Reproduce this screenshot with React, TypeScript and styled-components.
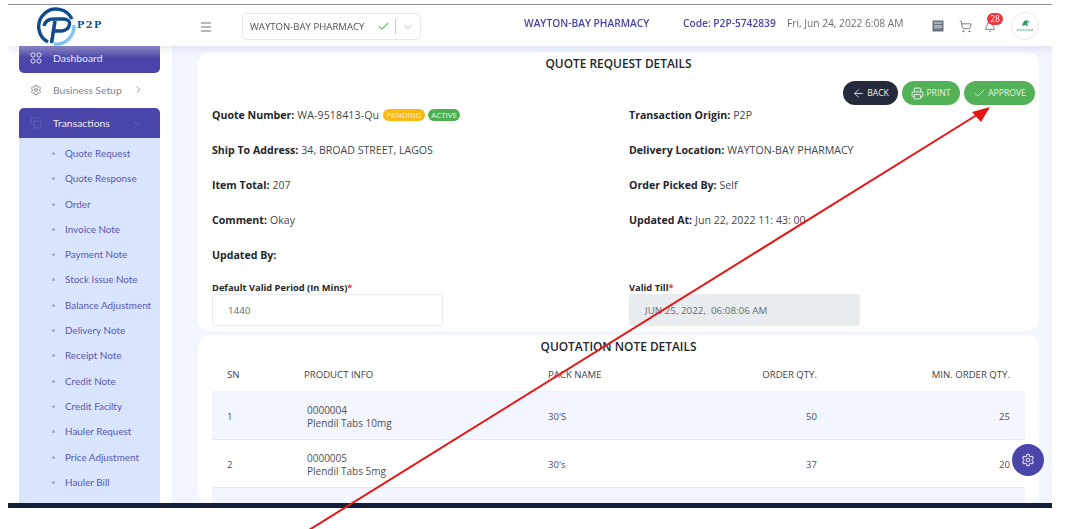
import React, { FunctionComponent } from "react";

// packages
import styled, { createGlobalStyle } from "styled-components";
import {
  ArrowLeft,
  Bell,
  Check,
  ChevronDown,
  ChevronRight,
  Copy,
  Menu,
  Printer,
  Settings,
  ShoppingCart,
} from "lucide-react";

const GlobalStyle = createGlobalStyle`
  html, body {
    margin: 0;
    padding: 0;
    background: #fff;
    overflow: hidden;
  }
  body {
    font-family: "Open Sans", "Noto Sans", sans-serif;
  }
`;

const Page = styled.div`
  position: relative;
  width: 1072px;
  height: 529px;
  padding: 4px 20px 0 8px;
  box-sizing: border-box;
  filter: blur(0.45px);
`;

const Screen = styled.div`
  width: 1044px;
  height: 504px;
  display: flex;
  flex-direction: column;
  border-top: 1px solid #8f9096;
  border-bottom: 5px solid #141f3c;
  box-sizing: border-box;
  overflow: hidden;
`;

/* header */
const Header = styled.header`
  position: relative;
  z-index: 2;
  flex: 0 0 41px;
  display: flex;
  align-items: center;
  background: #fff;
  box-shadow: 0 3px 8px rgba(90, 100, 170, 0.16);
`;

const Brand = styled.div`
  width: 191px;
  display: flex;
  align-items: center;
  padding-left: 28px;
  box-sizing: border-box;
  gap: 1px;
`;

const BrandName = styled.span`
  font-family: "DejaVu Serif", serif;
  font-size: 10px;
  font-weight: 700;
  letter-spacing: 1.2px;
  color: #10508f;
  margin-top: -3px;
`;

const Burger = styled(Menu)`
  color: #6f7278;
  margin-top: 2px;
`;

const StoreSelect = styled.div`
  width: 179px;
  height: 27px;
  margin-left: 29px;
  margin-top: 2px;
  display: flex;
  align-items: center;
  border: 1px solid #e6e8ee;
  border-radius: 4px;
  box-sizing: border-box;
  padding-left: 7px;
  font-size: 9.6px;
  color: #4c4f57;
`;

const SelectText = styled.span`
  width: 127px;
  white-space: nowrap;
`;

const SelectDivider = styled.span`
  width: 1px;
  height: 15px;
  background: #c8cad0;
  margin: 0 6px 0 5px;
`;

const HeaderName = styled.span`
  margin-left: 103px;
  margin-top: -5px;
  width: 159px;
  font-size: 10.2px;
  font-weight: 600;
  color: #4744a6;
  white-space: nowrap;
`;

const HeaderCode = styled(HeaderName)`
  margin-left: 0;
  width: 104px;
`;

const HeaderDate = styled.span`
  margin-top: -5px;
  font-size: 10.2px;
  color: #6a6d75;
  white-space: nowrap;
  width: 145px;
`;

const HeaderIcons = styled.div`
  display: flex;
  align-items: center;
  gap: 15px;
  margin-top: 1px;
  color: #60646c;
`;

const BellWrap = styled.div`
  position: relative;
  display: flex;
  margin-left: -3px;
  margin-top: 2px;
`;

const BellBadge = styled.span`
  position: absolute;
  top: -8px;
  left: 3px;
  width: 16px;
  height: 12px;
  border-radius: 6px;
  background: #ee3440;
  color: #fff;
  font-size: 8.4px;
  line-height: 12px;
  text-align: center;
`;

const Avatar = styled.div`
  width: 28px;
  height: 28px;
  display: flex;
  align-items: center;
  justify-content: center;
  border: 1px solid #dfe8fa;
  border-radius: 50%;
  box-sizing: border-box;
  background: #fff;
`;

/* body */
const Body = styled.div`
  flex: 1;
  min-height: 0;
  display: flex;
`;

const Sidebar = styled.nav`
  flex: 0 0 164px;
  padding: 0 12px 0 11px;
  box-sizing: border-box;
  background: #fff;
  font-family: "Lato", sans-serif;
  overflow: hidden;
`;

const ActiveItem = styled.div<{ $flat?: boolean }>`
  height: ${({ $flat }) => ($flat ? "27px" : "30px")};
  display: flex;
  align-items: center;
  padding-left: 11px;
  padding-bottom: ${({ $flat }) => ($flat ? "4px" : "0")};
  gap: 11px;
  background: ${({ $flat }) =>
    $flat ? "linear-gradient(#8d89c6, #4a45a8 45%)" : "#4a45a8"};
  color: #eceaf8;
  font-size: 10.4px;
  border-radius: ${({ $flat }) => ($flat ? "0 0 5px 5px" : "5px 5px 0 0")};
  box-sizing: border-box;
`;

const PlainItem = styled.div`
  height: 35px;
  display: flex;
  align-items: center;
  padding-left: 11px;
  padding-bottom: 2px;
  gap: 11px;
  font-size: 10.4px;
  color: #80838c;
  box-sizing: border-box;
`;

const ItemLabel = styled.span`
  min-width: 68px;
`;

const SubMenu = styled.ul`
  list-style: none;
  margin: 0;
  padding: 3px 0 0 46px;
  height: 370px;
  background: #d9e5ff;
  box-sizing: border-box;
`;

const SubItem = styled.li`
  position: relative;
  height: 25.3px;
  line-height: 25.3px;
  font-size: 9.9px;
  color: #5a58b0;
  white-space: nowrap;

  &::before {
    content: "";
    position: absolute;
    left: -13px;
    top: 11px;
    width: 3px;
    height: 3px;
    border-radius: 50%;
    background: #a5a8b2;
  }
`;

const Main = styled.main`
  flex: 1;
  min-width: 0;
  padding: 6px 13px 0 26px;
  display: flex;
  flex-direction: column;
  gap: 4px;
  background: #f3f6ff;
  overflow: hidden;
`;

const Card = styled.section`
  background: #fff;
  border-radius: 12px;
  padding: 0 14px;
  box-sizing: border-box;
  position: relative;
`;

const DetailsCard = styled(Card)`
  flex: 0 0 279px;
`;

const QuotationCard = styled(Card)`
  flex: 1;
  overflow: hidden;
`;

const CardTitle = styled.h2`
  margin: 0;
  padding-top: 3px;
  height: 20px;
  font-size: 11.9px;
  line-height: 16px;
  font-weight: 600;
  color: #24262c;
  text-align: center;
`;

const Actions = styled.div`
  display: flex;
  justify-content: flex-end;
  gap: 4px;
  margin: 3px -10px 0 0;
  height: 24px;
  padding-top: 3px;
`;

const ActionButton = styled.button<{ $dark?: boolean; $width: number }>`
  width: ${({ $width }) => $width}px;
  height: 24px;
  display: flex;
  align-items: center;
  justify-content: center;
  gap: 2px;
  padding: 0;
  border: 0;
  border-radius: 12px;
  background: ${({ $dark }) => ($dark ? "#262b3b" : "#53b257")};
  color: #e8f3e8;
  font-family: inherit;
  font-size: 8.6px;
`;

const DetailGrid = styled.div`
  display: grid;
  grid-template-columns: 417px 1fr;
  grid-auto-rows: 35px;
  margin-top: -8px;
  font-size: 10.6px;
  color: #44474e;
`;

const Detail = styled.div`
  display: flex;
  align-items: center;
  gap: 3px;
  white-space: nowrap;
`;

const DetailLabel = styled.b`
  font-weight: 700;
  color: #24262c;
`;

const QuoteValue = styled.span`
  margin-right: 1px;
  letter-spacing: 0.1px;
`;

const Pill = styled.span<{ $color: string }>`
  height: 12px;
  line-height: 12px;
  padding: 0 3.5px;
  border-radius: 6px;
  background: ${({ $color }) => $color};
  color: #f4f4ea;
  font-size: 7.9px;
`;

const FieldGrid = styled.div`
  display: grid;
  grid-template-columns: 417px 1fr;
  margin-top: 7px;
`;

const FieldLabel = styled.label`
  display: block;
  height: 15px;
  font-size: 9.3px;
  line-height: 17px;
  font-weight: 700;
  color: #24262c;
  white-space: nowrap;

  & > i {
    font-style: normal;
    color: #e23b3b;
  }
`;

const FieldBox = styled.div<{ $disabled?: boolean }>`
  width: 231px;
  height: 32px;
  padding-left: 15px;
  display: flex;
  align-items: center;
  box-sizing: border-box;
  border: 1px solid #e8eaef;
  border-radius: 3px;
  background: ${({ $disabled }) => ($disabled ? "#e9ecef" : "#fff")};
  font-size: 9.8px;
  color: #686b72;
  white-space: nowrap;
`;

const Table = styled.div`
  font-size: 9.6px;
  color: #4d5058;
`;

const Row = styled.div<{ $tint?: boolean; $head?: boolean }>`
  display: grid;
  grid-template-columns: 77px 244px 140px 129px 1fr;
  align-items: center;
  height: ${({ $head }) => ($head ? "33px" : "45px")};
  padding: ${({ $head }) => ($head ? "0 15px" : "2px 15px 0")};
  background: ${({ $tint }) => ($tint ? "#f3f6ff" : "#fff")};
  border-bottom: 1px solid ${({ $head }) => ($head ? "#eef1f8" : "#e6e8ee")};
  color: ${({ $head }) => ($head ? "#3f424a" : "#4d5058")};
`;

const RightCell = styled.div`
  text-align: right;
`;

const ProductCell = styled.div`
  padding-left: 3px;
  font-size: 10px;
  line-height: 13px;
`;

const SettingsFab = styled.button`
  position: absolute;
  left: 1012px;
  top: 444px;
  width: 32px;
  height: 32px;
  display: flex;
  align-items: center;
  justify-content: center;
  padding: 0;
  border: 0;
  border-radius: 50%;
  background: #4a45a8;
  color: #d9d8f2;
`;

const ArrowOverlay = styled.svg`
  position: absolute;
  left: 0;
  top: 0;
  pointer-events: none;
`;

const LogoMark: FunctionComponent = () => (
  <svg width="40" height="40" viewBox="0 0 40 40" fill="none">
    <path d="M18 38A18 18 0 0 0 38 19" stroke="#7cc3ee" strokeWidth="3.4" />
    <path d="M12 36A17.5 17.5 0 1 1 36 13" stroke="#0f4c8c" strokeWidth="3.4" />
    <path
      d="M8 20c1-5 5-7 10-7h9c5 0 7 2.500 6.500 5.500-.5 3-3 6-8 6.500h-7"
      stroke="#0f4c8c"
      strokeWidth="3.4"
    />
    <path d="M19 15l-3.500 22" stroke="#0f4c8c" strokeWidth="3.6" />
  </svg>
);

const StatementIcon: FunctionComponent = () => (
  <svg width="12" height="12" viewBox="0 0 12 12">
    <rect x="0.5" y="0.5" width="11" height="11" fill="#69727c" />
    <rect x="2" y="2" width="8" height="6.500" fill="#a9adb5" />
    <path d="M2 4.500h8" stroke="#69727c" strokeWidth="1" />
  </svg>
);

const AvatarMark: FunctionComponent = () => (
  <svg width="20" height="14" viewBox="0 0 20 14">
    <path d="M9 2l4-1-1 3 1 3-3-1-3 1 1-3z" fill="#2c9a5a" />
    <path d="M12 3l3-1-2 3z" fill="#3bb3c4" />
    <path d="M2 11h16" stroke="#6fc09a" strokeWidth="1.6" strokeDasharray="2 0.8" />
  </svg>
);

const DashboardIcon: FunctionComponent = () => (
  <svg width="12" height="12" viewBox="0 0 12 12" fill="none" stroke="#eceaf8">
    <rect x="1" y="1" width="4" height="4" rx="1.6" />
    <rect x="7" y="1" width="4" height="4" rx="1.6" />
    <rect x="1" y="7" width="4" height="4" rx="1.6" />
    <rect x="7" y="7" width="4" height="4" rx="1.6" />
  </svg>
);

const subItems = [
  "Quote Request",
  "Quote Response",
  "Order",
  "Invoice Note",
  "Payment Note",
  "Stock Issue Note",
  "Balance Adjustment",
  "Delivery Note",
  "Receipt Note",
  "Credit Note",
  "Credit Facilty",
  "Hauler Request",
  "Price Adjustment",
  "Hauler Bill",
];

const rows = [
  { sn: "1", code: "0000004", name: "Plendil Tabs 10mg", pack: "30'S", qty: "50", min: "25" },
  { sn: "2", code: "0000005", name: "Plendil Tabs 5mg", pack: "30's", qty: "37", min: "20" },
  { sn: "", code: "0000047", name: "", pack: "", qty: "", min: "" },
];

const App: FunctionComponent = () => (
  <Page>
    <GlobalStyle />
    <Screen>
      <Header>
        <Brand>
          <LogoMark />
          <BrandName>P2P</BrandName>
        </Brand>
        <Burger size={14} strokeWidth={1.8} />
        <StoreSelect>
          <SelectText>WAYTON-BAY PHARMACY</SelectText>
          <Check size={13} color="#6cbf70" />
          <SelectDivider />
          <ChevronDown size={12} color="#b0b3ba" />
        </StoreSelect>
        <HeaderName>WAYTON-BAY PHARMACY</HeaderName>
        <HeaderCode>Code: P2P-5742839</HeaderCode>
        <HeaderDate>Fri, Jun 24, 2022 6:08 AM</HeaderDate>
        <HeaderIcons>
          <StatementIcon />
          <ShoppingCart size={13} strokeWidth={1.5} />
          <BellWrap>
            <Bell size={12} strokeWidth={1.6} />
            <BellBadge>28</BellBadge>
          </BellWrap>
          <Avatar>
            <AvatarMark />
          </Avatar>
        </HeaderIcons>
      </Header>
      <Body>
        <Sidebar>
          <ActiveItem $flat>
            <DashboardIcon />
            Dashboard
          </ActiveItem>
          <PlainItem>
            <Settings size={12} strokeWidth={1.4} color="#5f626a" />
            <ItemLabel>Business Setup</ItemLabel>
            <ChevronRight size={11} />
          </PlainItem>
          <ActiveItem>
            <Copy size={12} strokeWidth={1.4} color="#6a66b6" />
            <ItemLabel>Transactions</ItemLabel>
            <ChevronDown size={11} color="#6a66b6" />
          </ActiveItem>
          <SubMenu>
            {subItems.map((item) => (
              <SubItem key={item}>{item}</SubItem>
            ))}
          </SubMenu>
        </Sidebar>
        <Main>
          <DetailsCard>
            <CardTitle>QUOTE REQUEST DETAILS</CardTitle>
            <Actions>
              <ActionButton $dark $width={55}>
                <ArrowLeft size={13} strokeWidth={1.6} />
                BACK
              </ActionButton>
              <ActionButton $width={58}>
                <Printer size={13} strokeWidth={1.8} />
                PRINT
              </ActionButton>
              <ActionButton $width={71}>
                <Check size={13} strokeWidth={1.4} />
                APPROVE
              </ActionButton>
            </Actions>
            <DetailGrid>
              <Detail>
                <DetailLabel>Quote Number:</DetailLabel>
                <QuoteValue>WA-9518413-Qu</QuoteValue>
                <Pill $color="#fdb913">PENDING</Pill>
                <Pill $color="#4caf50">ACTIVE</Pill>
              </Detail>
              <Detail>
                <DetailLabel>Transaction Origin:</DetailLabel> P2P
              </Detail>
              <Detail>
                <DetailLabel>Ship To Address:</DetailLabel> 34, BROAD STREET, LAGOS
              </Detail>
              <Detail>
                <DetailLabel>Delivery Location:</DetailLabel> WAYTON-BAY PHARMACY
              </Detail>
              <Detail>
                <DetailLabel>Item Total:</DetailLabel> 207
              </Detail>
              <Detail>
                <DetailLabel>Order Picked By:</DetailLabel> Self
              </Detail>
              <Detail>
                <DetailLabel>Comment:</DetailLabel> Okay
              </Detail>
              <Detail>
                <DetailLabel>Updated At:</DetailLabel> Jun 22, 2022 11: 43: 00
              </Detail>
              <Detail>
                <DetailLabel>Updated By:</DetailLabel>
              </Detail>
            </DetailGrid>
            <FieldGrid>
              <div>
                <FieldLabel>
                  Default Valid Period (In Mins)<i>*</i>
                </FieldLabel>
                <FieldBox>1440</FieldBox>
              </div>
              <div>
                <FieldLabel>
                  Valid Till<i>*</i>
                </FieldLabel>
                <FieldBox $disabled>JUN 25, 2022,&nbsp; 06:08:06 AM</FieldBox>
              </div>
            </FieldGrid>
          </DetailsCard>
          <QuotationCard>
            <CardTitle>QUOTATION NOTE DETAILS</CardTitle>
            <Table>
              <Row $head>
                <div>SN</div>
                <div>PRODUCT INFO</div>
                <div>PACK NAME</div>
                <RightCell>ORDER QTY.</RightCell>
                <RightCell>MIN. ORDER QTY.</RightCell>
              </Row>
              {rows.map((row, i) => (
                <Row key={row.code} $tint={i % 2 === 0}>
                  <div>{row.sn}</div>
                  <ProductCell>
                    {row.code}
                    <br />
                    {row.name}
                  </ProductCell>
                  <div>{row.pack}</div>
                  <RightCell>{row.qty}</RightCell>
                  <RightCell>{row.min}</RightCell>
                </Row>
              ))}
            </Table>
          </QuotationCard>
        </Main>
      </Body>
    </Screen>
    <SettingsFab>
      <Settings size={14} />
    </SettingsFab>
    <ArrowOverlay width="1072" height="529" viewBox="0 0 1072 529">
      <line x1="309" y1="530" x2="980" y2="113" stroke="#e81515" strokeWidth="2" />
      <polygon points="990,107 972,112 981,122" fill="#e81515" />
    </ArrowOverlay>
  </Page>
);

export default App;
